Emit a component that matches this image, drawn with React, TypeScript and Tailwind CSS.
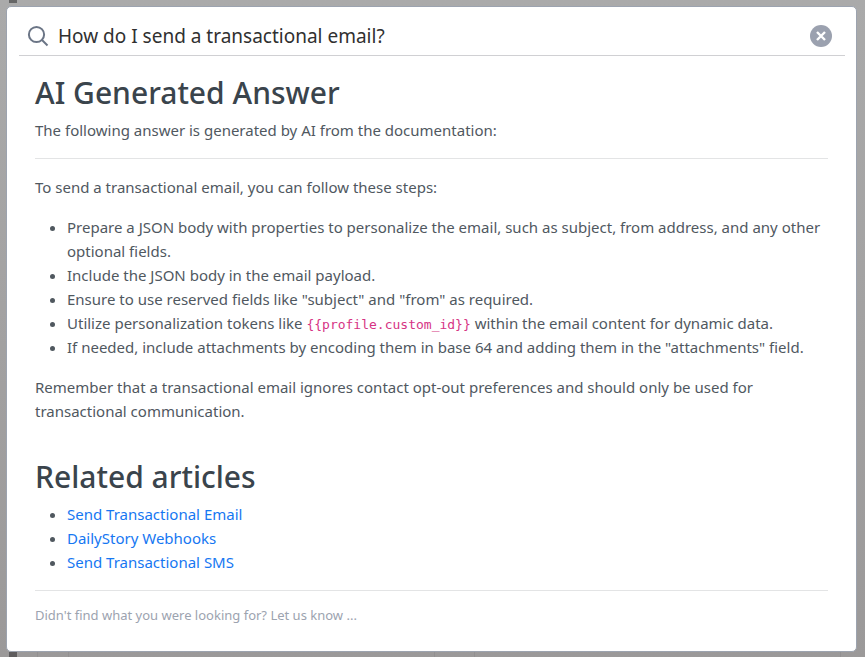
import React, { useState } from "react";

const steps = [
  "Prepare a JSON body with properties to personalize the email, such as subject, from address, and any other optional fields.",
  "Include the JSON body in the email payload.",
  'Ensure to use reserved fields like "subject" and "from" as required.',
  <>
    Utilize personalization tokens like{" "}
    <code className="font-['DejaVu_Sans_Mono',monospace] text-[13px] leading-none text-[#d63384]">{"{{profile.custom_id}}"}</code>{" "}
    within the email content for dynamic data.
  </>,
  'If needed, include attachments by encoding them in base 64 and adding them in the "attachments" field.',
];

const articles = ["Send Transactional Email", "DailyStory Webhooks", "Send Transactional SMS"];

// dimmed page that shows around the edges of the modal
function Backdrop() {
  return (
    <div className="absolute inset-0 flex flex-col justify-between bg-linear-to-b from-[#aaaaaa] to-[#9b9999]" aria-hidden="true">
      <div className="ml-[9px] h-[3px] w-2 bg-[#666666]" />
      <div className="flex h-[6px] pl-[9px]">
        <div className="w-2 bg-[#5e5c5d]" />
        <div className="ml-5 w-8 border-x border-[#929091]" />
        <div className="flex-1 border-r border-[#929091]" />
        <div className="w-10 border-r border-[#929091]" />
        <div className="mr-6 flex-1 border-r border-[#929091]" />
      </div>
    </div>
  );
}

function SearchBar() {
  const [query, setQuery] = useState<string>("How do I send a transactional email?");

  return (
    <form role="search" onSubmit={(e) => e.preventDefault()} className="mr-[11px] ml-3 flex h-[49px] items-center border-b border-[#d0d0d3] pt-2.5 pr-3 pl-2">
      <label htmlFor="search">
        <svg width="22" height="22" viewBox="0 0 22 22" fill="none" stroke="#6b7586" strokeWidth="2" aria-label="Search">
          <circle cx="9.5" cy="9.5" r="7.6" />
          <path d="M15 15l5.5 5.5" />
        </svg>
      </label>
      <input
        id="search"
        type="text"
        value={query}
        onChange={(e) => setQuery(e.target.value)}
        className="ml-[9px] min-w-0 flex-1 text-[19px] text-[#303030] outline-none"
      />
      <button type="button" onClick={() => setQuery("")} aria-label="Clear">
        <svg width="24" height="24" viewBox="0 0 24 24" fill="none">
          <circle cx="12" cy="12" r="11" fill="#9ba1af" />
          <path d="M8 8l8 8M16 8l-8 8" stroke="#ffffff" strokeWidth="2.4" />
        </svg>
      </button>
    </form>
  );
}

export default function App() {
  return (
    <div className="relative min-h-screen overflow-hidden py-1.5 pr-2 pl-1.5 font-['Noto_Sans',sans-serif] text-[15px] leading-6 text-[#50585f]">
      <Backdrop />
      <main className="relative rounded-[5px] border border-[#9ca3af] bg-white">
        <SearchBar />

        <div className="px-7 pt-[18px]">
          <h2 className="mb-1.5 text-3xl leading-[38px] font-medium text-[#3a444c]">AI Generated Answer</h2>
          <p>The following answer is generated by AI from the documentation:</p>
          <hr className="my-4 border-[#e3e4e5]" />
          <p className="mb-4">To send a transactional email, you can follow these steps:</p>
          <ul className="mb-4 list-disc pl-8">
            {steps.map((step, i) => (
              <li key={i}>{step}</li>
            ))}
          </ul>
          <p>
            Remember that a transactional email ignores contact opt-out preferences and should only be used for
            transactional communication.
          </p>

          <h2 className="mt-[35px] mb-1.5 text-3xl leading-[38px] font-medium text-[#3a444c]">Related articles</h2>
          <ul className="list-disc pl-8">
            {articles.map((title) => (
              <li key={title}>
                <a href="#" className="text-[#1677f2]">{title}</a>
              </li>
            ))}
          </ul>
          <hr className="mt-4 mb-3 border-[#e3e4e5]" />
          <p className="pb-6 text-[13px] text-[#9ca3af]">Didn't find what you were looking for? Let us know ...</p>
        </div>
      </main>
    </div>
  );
}
